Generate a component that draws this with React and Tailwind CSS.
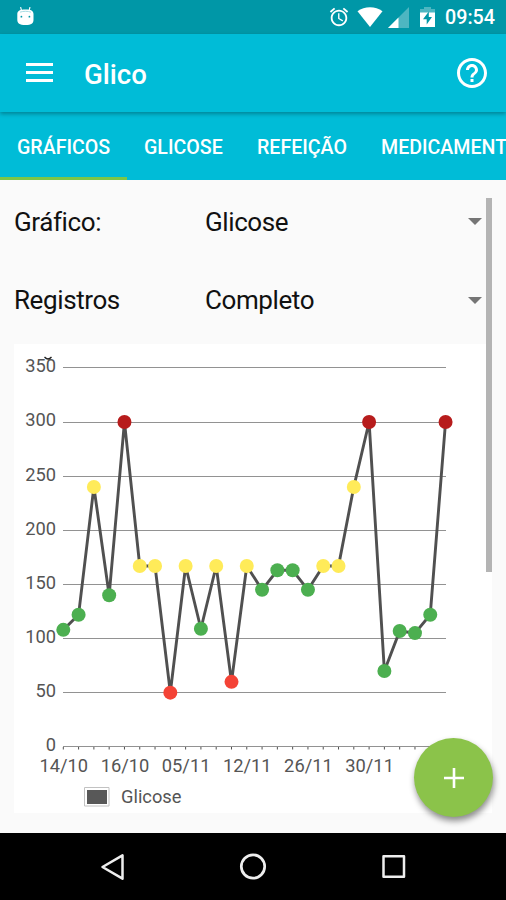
import React from 'react';

const tabs = [
  { label: 'GRÁFICOS', width: 'w-[127px]', active: true },
  { label: 'GLICOSE', width: 'w-[113px]' },
  { label: 'REFEIÇÃO', width: 'w-[124px]' },
  { label: 'MEDICAMENTO', width: 'w-[170px]' },
];

const filtros = [
  { label: 'Gráfico:', value: 'Glicose' },
  { label: 'Registros', value: 'Completo' },
];

const registros = [
  108, 122, 240, 140, 300, 167, 167, 50, 167, 109, 167, 60, 167,
  145, 163, 163, 145, 167, 167, 240, 300, 70, 107, 105, 122, 300,
];

const datas = ['14/10', '16/10', '05/11', '12/11', '26/11', '30/11'];
const escala = [350, 300, 250, 200, 150, 100, 50, 0];

const getColor = (valor) => {
  if (valor >= 300) return '#b71c1c';
  if (valor > 165) return '#ffeb59';
  if (valor < 70) return '#f44336';
  return '#4caf50';
};

// chart coordinates, relative to the white card
const px = (i) => 49.3 + i * 15.29;
const py = (valor) => 402.8 - valor * 1.0828;

function StatusBar() {
  return (
    <div className="flex h-[34px] items-center bg-[#0097a7] text-white">
      <svg className="ml-[17px] h-5 w-[17px] shrink-0" viewBox="0 0 17 20">
        <path d="M3.600 0l1 4M13 0l-1 4" stroke="#fff" strokeWidth="1.100" />
        <path d="M0.300 7C.3 3.800 3 2.500 8.500 2.500s8 1.300 8 4.500v5.500c0 4-2 5.500-8 5.500s-8.200-1.500-8.200-5.500z" fill="#fff" />
        <path d="M3 5.200C6 4 11 4 14 5.200" stroke="#a6dce3" strokeWidth="1" fill="none" />
        <circle cx="4.400" cy="9.700" r="0.900" fill="#0097a7" />
        <circle cx="12.400" cy="9.700" r="0.900" fill="#0097a7" />
      </svg>
      <div className="ml-auto flex items-center pr-[11px]">
        <svg className="h-[22px] w-[22px]" viewBox="0 0 24 24" fill="#fff">
          <path d="M22 5.720l-4.600-3.860-1.290 1.530 4.600 3.860L22 5.720zM7.880 3.390L6.600 1.860 2 5.710l1.290 1.530 4.590-3.850zM12.500 8H11v6l4.750 2.850.75-1.230-4-2.370V8zM12 4c-4.970 0-9 4.030-9 9s4.020 9 9 9c4.970 0 9-4.030 9-9s-4.030-9-9-9zm0 16c-3.870 0-7-3.130-7-7s3.130-7 7-7 7 3.130 7 7-3.130 7-7 7z" />
        </svg>
        <svg className="ml-[7px] h-5 w-[26px]" viewBox="0 0 26 20">
          <path d="M0.500 4.200C7.500-1.200 18.500-1.200 25.500 4.200L13 20z" fill="#fff" />
        </svg>
        <svg className="ml-[5px] h-[21px] w-[21px]" viewBox="0 0 21 21">
          <path d="M21 0v21H0z" fill="#4db6c1" />
          <path d="M10.500 10.500V21H0z" fill="#fff" />
        </svg>
        <svg className="ml-[11px] h-5 w-[15px]" viewBox="0 0 15 20">
          <path d="M4 0h7v2h4v4H0V2h4z" fill="#4db6c1" />
          <path d="M0 5.500h15V20H0z" fill="#fff" />
          <path d="M8.800 4.500L3 12.300h3.700V17.500L12 10H8.800z" fill="#0097a7" />
        </svg>
        <span className="ml-[10px] mt-[2px] text-[19.700px] font-medium leading-none">09:54</span>
      </div>
    </div>
  );
}

function Toolbar() {
  return (
    <header className="relative z-10 flex h-[78px] items-center bg-[#00bcd7] text-white shadow-[0_2px_4px_rgba(0,0,0,0.3)]">
      <svg className="mb-[2px] ml-[26px] h-[19px] w-[27px]" viewBox="0 0 27 19" fill="#fff">
        <path d="M0 0h27v3H0zM0 8h27v3H0zM0 16h27v3H0z" />
      </svg>
      <h1 className="ml-[31px] mt-[3px] text-[27.600px] font-medium leading-none">Glico</h1>
      <svg className="ml-auto mr-[16px] h-9 w-9" viewBox="0 0 24 24" fill="#fff">
        <path d="M11 18h2v-2h-2v2zm1-16C6.480 2 2 6.480 2 12s4.480 10 10 10 10-4.480 10-10S17.520 2 12 2zm0 18c-4.410 0-8-3.590-8-8s3.590-8 8-8 8 3.590 8 8-3.590 8-8 8zm0-14c-2.210 0-4 1.790-4 4h2c0-1.100.9-2 2-2s2 .9 2 2c0 2-3 1.750-3 5h2c0-2.250 3-2.500 3-5 0-2.210-1.790-4-4-4z" />
      </svg>
    </header>
  );
}

function Tabs() {
  return (
    <nav className="flex h-[68px] overflow-hidden bg-[#00bcd7]">
      {tabs.map((tab) => (
        <div
          key={tab.label}
          className={`${tab.width} shrink-0 whitespace-nowrap border-b-[3px] pl-[17px] pt-[2px] text-[19.600px] font-medium leading-[68px] text-white ${tab.active ? 'border-[#7cc648]' : 'border-transparent'}`}
        >
          {tab.label}
        </div>
      ))}
    </nav>
  );
}

function Grafico() {
  return (
    <svg className="block h-[469px] w-[478px] bg-white" viewBox="0 0 478 469" fontFamily="Roboto" fontSize="18.300" fill="#555">
      {escala.map((valor) => (
        <g key={valor}>
          <path d={`M49 ${Math.floor(py(valor) + 0.05) + 0.5}H432`} stroke="#929292" strokeWidth="1.200" />
          <text x="42" y={py(valor) + 4.5} textAnchor="end">{valor}</text>
        </g>
      ))}
      {registros.map((_, i) => (
        <path key={i} d={`M${px(i)} 403v2.500`} stroke="#505050" strokeWidth="1" />
      ))}
      <path d="M30.500 13q3.500 4 7 0" stroke="#222" strokeWidth="1.300" fill="none" />
      <polyline
        points={registros.map((valor, i) => `${px(i)},${py(valor)}`).join(' ')}
        fill="none"
        stroke="#505050"
        strokeWidth="2.900"
      />
      {registros.map((valor, i) => (
        <circle key={i} cx={px(i)} cy={py(valor)} r="7" fill={getColor(valor)} />
      ))}
      {datas.map((data, i) => (
        <text key={data} x={px(i * 4) + 0.5} y="428" textAnchor="middle">{data}</text>
      ))}
      <path d="M70.500 443.500h24.500v18.500h-24.500z" fill="#fff" stroke="#c2c2c2" />
      <path d="M73 446h20v14H73z" fill="#585858" />
      <text x="107" y="459">Glicose</text>
    </svg>
  );
}

function NavBar() {
  return (
    <footer className="flex h-[67px] items-center justify-between bg-black pl-[100px] pr-[100px]">
      <svg className="h-7 w-[26px]" viewBox="0 0 26 28" fill="none" stroke="#eee" strokeWidth="2.500" strokeLinejoin="round">
        <path d="M22.500 2.300v23.400L2.500 14z" />
      </svg>
      <svg className="mr-[2px] h-7 w-7" viewBox="0 0 28 28" fill="none" stroke="#eee" strokeWidth="2.700">
        <circle cx="14" cy="13.500" r="11.700" />
      </svg>
      <svg className="h-6 w-6" viewBox="0 0 24 24" fill="none" stroke="#eee" strokeWidth="2.500" strokeLinejoin="round">
        <rect x="1.500" y="1.250" width="20.500" height="20.500" />
      </svg>
    </footer>
  );
}

function App() {
  return (
    <div className="relative flex h-[900px] w-[506px] flex-col overflow-hidden bg-[#fafafa] font-['Roboto',sans-serif]">
      <StatusBar />
      <Toolbar />
      <Tabs />

      <main className="relative flex-1 px-[14px] pt-[3px]">
        {filtros.map((filtro) => (
          <div key={filtro.label} className="flex h-[78.500px] items-center text-[26px] tracking-[-0.4px] text-[#111]">
            <span className="w-[191px]">{filtro.label}</span>
            <span>{filtro.value}</span>
            <svg className="mb-[1px] ml-auto mr-[10px] h-[7px] w-[14px]" viewBox="0 0 14 7">
              <path d="M0 0h14L7 7z" fill="#757575" />
            </svg>
          </div>
        ))}
        <div className="mt-[4px]">
          <Grafico />
        </div>

        {/* scrollbar */}
        <div className="absolute right-[14px] top-[18px] h-[374px] w-[6px] bg-[#b4b4b4]" />

        <button className="absolute bottom-[16px] right-[13px] flex h-[79px] w-[79px] items-center justify-center rounded-full bg-[#8bc34a] shadow-[1px_4px_6px_rgba(0,0,0,0.45)]">
          <svg className="h-5 w-5" viewBox="0 0 20 20">
            <path d="M0 10h20M10 0v20" stroke="#fff" strokeWidth="2.600" />
          </svg>
        </button>
      </main>

      <NavBar />
    </div>
  );
}

export default App;
